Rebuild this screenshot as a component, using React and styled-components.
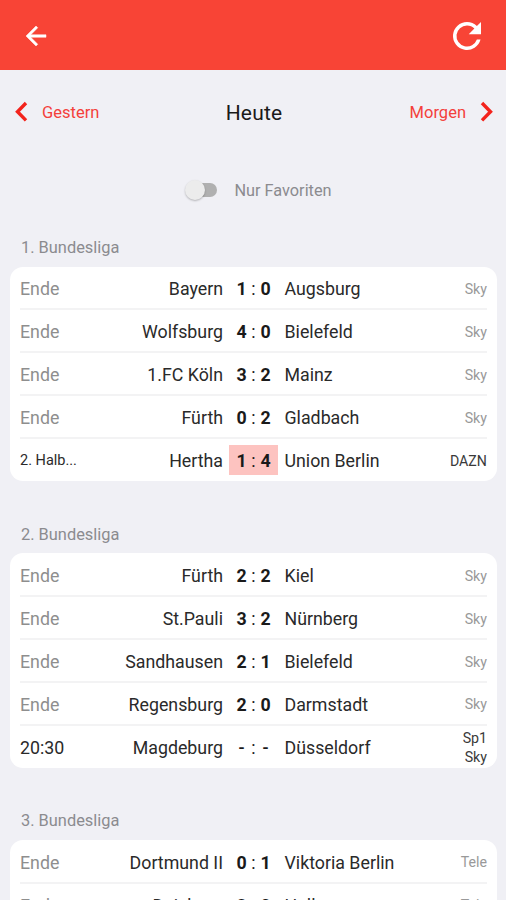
import styled, { createGlobalStyle } from "styled-components";

const GlobalStyle = createGlobalStyle`
  * {
    box-sizing: border-box;
  }
  body {
    margin: 0;
    background-color: #f0f0f5;
    font-family: Roboto, "Liberation Sans", sans-serif;
  }
`;

const Screen = styled.div`
  height: 900px;
  overflow: hidden;
  background-color: #f0f0f5;
`;

const AppBar = styled.header`
  display: flex;
  justify-content: space-between;
  align-items: center;
  height: 70px;
  padding: 1px 18px 0 21px;
  background-color: #f84436;
`;

const IconButton = styled.button`
  display: flex;
  padding: 0;
  border: 0;
  background-color: transparent;
  color: #fff;
  cursor: pointer;
`;

const DayNav = styled.nav`
  display: grid;
  grid-template-columns: 1fr auto 1fr;
  align-items: center;
  height: 84px;
  padding: 0 12px 0 14px;
`;

const DayLink = styled.a`
  display: flex;
  align-items: center;
  justify-self: ${(props) => (props.$end ? "end" : "start")};
  gap: 14px;
  font-size: 16.5px;
  line-height: 24px;
  color: #f4403b;
  cursor: pointer;
  span {
    padding-top: 2px;
  }
`;

const Today = styled.h1`
  margin: 0;
  padding-top: 1px;
  font-size: 21px;
  font-weight: 400;
  line-height: 28px;
  letter-spacing: 0.2px;
  color: #1a1a1a;
`;

const Favorites = styled.label`
  display: flex;
  align-items: center;
  justify-content: center;
  gap: 17px;
  height: 72px;
  padding-left: 16px;
  font-size: 16.3px;
  color: #8b8b8f;
`;

const Track = styled.span`
  display: flex;
  align-items: center;
  width: 27px;
  height: 14px;
  border-radius: 7px;
  background-color: #b0b0b0;
`;

const Thumb = styled.span`
  flex: none;
  width: 20px;
  height: 20px;
  margin-left: -5px;
  border-radius: 50%;
  background-color: #ececec;
  box-shadow: 0 1px 2px rgba(0, 0, 0, 0.25);
`;

const League = styled.section`
  padding: 0 9.5px 31.5px 10px;
`;

const LeagueTitle = styled.h2`
  margin: 0;
  height: 40.5px;
  padding: 0 11px;
  font-size: 16.4px;
  font-weight: 400;
  line-height: 43px;
  color: #8b8b8f;
`;

const Card = styled.div`
  padding: 0 10px;
  border-radius: 13px;
  background-color: #fff;
`;

const Match = styled.div`
  display: grid;
  grid-template-columns: 64px 139px 6px 49px 6.5px 1fr auto;
  align-items: center;
  height: 42.95px;
  padding-top: 2px;
  border: 0 solid #f3f3f4;
  border-width: 1px 0;
  font-size: 17.8px;
  color: #2a2a2a;
  &:first-child {
    border-top-color: transparent;
  }
  &:last-child {
    border-bottom-color: transparent;
  }
`;

const Status = styled.span`
  font-size: ${(props) => (props.$small ? "14.5px" : "17.8px")};
  color: ${(props) => (props.$done ? "#8e8e8e" : "#2a2a2a")};
  white-space: nowrap;
`;

const Home = styled.span`
  grid-column: 2;
  text-align: right;
  white-space: nowrap;
`;

const Score = styled.span`
  grid-column: 4;
  display: grid;
  grid-template-columns: 14px 10px 14px;
  align-items: center;
  justify-content: center;
  height: 30px;
  margin-top: -2px;
  padding-top: 2px;
  font-weight: ${(props) => (props.$open ? 500 : 700)};
  text-align: center;
  color: #1a1a1a;
  background-color: ${(props) => (props.$live ? "#fdc3c0" : "transparent")};
`;

const Colon = styled.span`
  font-weight: 400;
`;

const Away = styled.span`
  grid-column: 6;
  white-space: nowrap;
`;

const Channels = styled.span`
  display: flex;
  flex-direction: column;
  align-items: flex-end;
  margin-right: -0.5px;
  padding-top: 1px;
  font-size: 14.2px;
  line-height: 19px;
  color: ${(props) => (props.$done ? "#999" : "#3a3a3a")};
`;

const leagues = [
  {
    name: "1. Bundesliga",
    matches: [
      ["Ende", "Bayern", "1", "0", "Augsburg", ["Sky"]],
      ["Ende", "Wolfsburg", "4", "0", "Bielefeld", ["Sky"]],
      ["Ende", "1.FC Köln", "3", "2", "Mainz", ["Sky"]],
      ["Ende", "Fürth", "0", "2", "Gladbach", ["Sky"]],
      ["2. Halb...", "Hertha", "1", "4", "Union Berlin", ["DAZN"]],
    ],
  },
  {
    name: "2. Bundesliga",
    matches: [
      ["Ende", "Fürth", "2", "2", "Kiel", ["Sky"]],
      ["Ende", "St.Pauli", "3", "2", "Nürnberg", ["Sky"]],
      ["Ende", "Sandhausen", "2", "1", "Bielefeld", ["Sky"]],
      ["Ende", "Regensburg", "2", "0", "Darmstadt", ["Sky"]],
      ["20:30", "Magdeburg", "-", "-", "Düsseldorf", ["Sp1", "Sky"]],
    ],
  },
  {
    name: "3. Bundesliga",
    matches: [
      ["Ende", "Dortmund II", "0", "1", "Viktoria Berlin", ["Tele"]],
      ["Ende", "Duisburg", "2", "0", "Halle", ["Tele"]],
    ],
  },
];

function Chevron({ right }) {
  return (
    <svg width="14" height="22" viewBox="0 0 14 22" fill="none" stroke="#f3231c" strokeWidth="3.4">
      <path d={right ? "M2 2 10.5 10.7 2 19.4" : "M12 2 3.5 10.7 12 19.4"} />
    </svg>
  );
}

function MatchRow({ match }) {
  const [status, home, homeGoals, awayGoals, away, channels] = match;
  const done = status === "Ende";
  const live = status.startsWith("2. Halb");

  return (
    <Match>
      <Status $done={done} $small={live}>{status}</Status>
      <Home>{home}</Home>
      <Score $live={live} $open={homeGoals === "-"}>
        <span>{homeGoals}</span>
        <Colon>:</Colon>
        <span>{awayGoals}</span>
      </Score>
      <Away>{away}</Away>
      <Channels $done={done}>
        {channels.map((channel) => (
          <span key={channel}>{channel}</span>
        ))}
      </Channels>
    </Match>
  );
}

export default function App() {
  return (
    <>
      <GlobalStyle />
      <Screen>
        <AppBar>
          <IconButton aria-label="Zurück">
            <svg width="30" height="30" viewBox="0 0 24 24" fill="currentColor" stroke="currentColor" strokeWidth="0.4">
              <path d="M20 11H7.83l5.59-5.59L12 4l-8 8 8 8 1.41-1.41L7.83 13H20v-2z" />
            </svg>
          </IconButton>
          <IconButton aria-label="Aktualisieren">
            <svg width="42" height="42" viewBox="0 0 24 24" fill="currentColor">
              <path d="M17.65 6.35A7.96 7.96 0 0 0 12 4a8 8 0 1 0 7.73 10h-2.08A6 6 0 1 1 12 6c1.66 0 3.14.69 4.22 1.78L13 11h7V4l-2.35 2.35z" />
            </svg>
          </IconButton>
        </AppBar>
        <DayNav>
          <DayLink>
            <Chevron />
            <span>Gestern</span>
          </DayLink>
          <Today>Heute</Today>
          <DayLink $end>
            <span>Morgen</span>
            <Chevron right />
          </DayLink>
        </DayNav>
        <Favorites>
          <Track>
            <Thumb />
          </Track>
          Nur Favoriten
        </Favorites>
        {leagues.map((league) => (
          <League key={league.name}>
            <LeagueTitle>{league.name}</LeagueTitle>
            <Card>
              {league.matches.map((match) => (
                <MatchRow key={match[1]} match={match} />
              ))}
            </Card>
          </League>
        ))}
      </Screen>
    </>
  );
}
